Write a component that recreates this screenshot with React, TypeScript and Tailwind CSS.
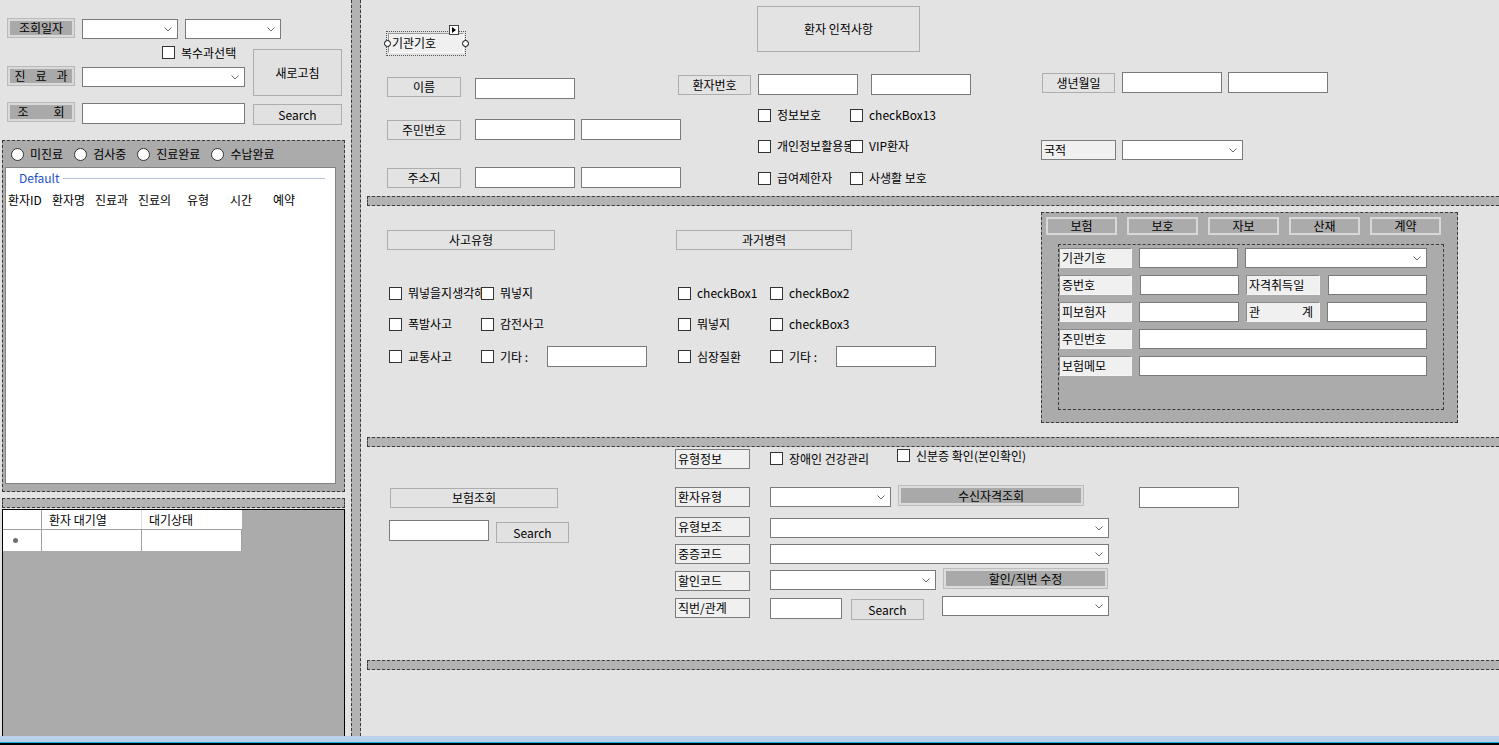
import React from "react";

type P = { className?: string; children?: React.ReactNode };

function Chevron() {
  return (
    <svg width="8" height="5" viewBox="0 0 8 5" className="shrink-0">
      <path d="M0.5 0.5 L4 4 L7.5 0.5" fill="none" stroke="#6a6a6a" strokeWidth="1" />
    </svg>
  );
}

function TB({ className = "" }: P) {
  return <div className={"shrink-0 bg-white border border-[#7a7a7a] " + className} />;
}

function Combo({ className = "" }: P) {
  return (
    <div className={"h-[20px] shrink-0 bg-white border border-[#7a7a7a] flex items-center justify-end pr-[5px] " + className}>
      <Chevron />
    </div>
  );
}

function GrayLabel({ className = "", children }: P) {
  return (
    <div className={"shrink-0 border border-[#bababa] p-[2px] bg-[#d9d9d9] " + className}>
      <div className="w-full h-full bg-[#a9a9a9] flex items-center justify-center whitespace-pre">{children}</div>
    </div>
  );
}

function FlatLabel({ className = "", children }: P) {
  return (
    <div className={"h-[20px] shrink-0 border border-[#adadad] flex items-center justify-center whitespace-nowrap " + className}>
      {children}
    </div>
  );
}

function SunkenLabel({ className = "", children }: P) {
  return (
    <div className={"h-[20px] shrink-0 border border-[#7c7c7c] bg-[#f0f0f0] flex items-center pl-[2px] whitespace-nowrap " + className}>
      {children}
    </div>
  );
}

function InsLabel({ className = "", children }: P) {
  return (
    <div
      className={
        "h-[20px] shrink-0 border border-t-[#8a8a8a] border-l-[#8a8a8a] border-r-[#f4f4f4] border-b-[#f4f4f4] bg-[#f0f0f0] flex items-center pl-[2px] whitespace-nowrap " +
        className
      }
    >
      {children}
    </div>
  );
}

function Btn({ className = "", children }: P) {
  return (
    <div className={"shrink-0 border border-[#adadad] bg-[#e1e1e1] flex items-center justify-center whitespace-nowrap " + className}>
      {children}
    </div>
  );
}

function Check({ className = "", children }: P) {
  return (
    <div className={"flex items-center whitespace-nowrap shrink-0 " + className}>
      <span className="w-[13px] h-[13px] shrink-0 bg-white border border-[#333333]" />
      <span className="ml-[6px]">{children}</span>
    </div>
  );
}

function Radio({ children }: P) {
  return (
    <div className="flex items-center whitespace-nowrap">
      <span className="w-[13px] h-[13px] shrink-0 rounded-full bg-white border border-[#333333]" />
      <span className="ml-[6px]">{children}</span>
    </div>
  );
}

function HBar() {
  return <div className="ml-[6px] h-[10px] shrink-0 bg-[#b3b3b3] border-y border-l border-dashed border-[#3a3a3a]" />;
}

function LeftPanel() {
  return (
    <div className="w-[351px] shrink-0 flex flex-col">
      <div className="h-[140px] shrink-0 pl-[7px] pt-[18px]">
        <div className="flex items-start">
          <GrayLabel className="w-[68px] h-[20px]">조회일자</GrayLabel>
          <Combo className="ml-[7px] mt-[1px] w-[96px]" />
          <Combo className="ml-[7px] mt-[1px] w-[96px]" />
        </div>
        <div className="flex">
          <div className="w-[238px] flex flex-col">
            <Check className="mt-[7px] ml-[155px] h-[13px]">복수과선택</Check>
            <div className="mt-[7px] flex items-start">
              <GrayLabel className="w-[68px] h-[20px]">
                <span className="flex gap-[10px]">
                  <span>진</span>
                  <span>료</span>
                  <span>과</span>
                </span>
              </GrayLabel>
              <Combo className="ml-[7px] mt-[1px] w-[163px]" />
            </div>
            <div className="mt-[15px] flex items-start">
              <GrayLabel className="w-[68px] h-[20px]">
                <span className="flex gap-[25px]">
                  <span>조</span>
                  <span>회</span>
                </span>
              </GrayLabel>
              <TB className="ml-[7px] mt-[1px] w-[163px] h-[21px]" />
            </div>
          </div>
          <div className="ml-[8px] w-[89px] flex flex-col">
            <Btn className="mt-[10px] h-[47px] w-[89px]">새로고침</Btn>
            <Btn className="mt-[8px] h-[21px] w-[89px]">Search</Btn>
          </div>
        </div>
      </div>

      <div className="ml-[2px] w-[343px] h-[352px] shrink-0 border border-dashed border-[#3a3a3a] bg-[#ababab] flex flex-col">
        <div className="h-[26px] shrink-0 flex items-center pl-[8px] gap-[11px]">
          <Radio>미진료</Radio>
          <Radio>검사중</Radio>
          <Radio>진료완료</Radio>
          <Radio>수납완료</Radio>
        </div>
        <div className="ml-[2px] w-[331px] h-[317px] bg-white border border-[#828282] flex flex-col">
          <div className="h-[20px] flex items-center">
            <span className="ml-[13px] text-[#2050c8]">Default</span>
            <span className="flex-1 ml-[3px] mr-[10px] h-[1px] bg-[#b6bedc]" />
          </div>
          <div className="mt-[2px] h-[20px] flex items-center pl-[2px] whitespace-nowrap">
            <span className="w-[44px]">환자ID</span>
            <span className="w-[43px]">환자명</span>
            <span className="w-[43px]">진료과</span>
            <span className="w-[49px]">진료의</span>
            <span className="w-[43px]">유형</span>
            <span className="w-[43px]">시간</span>
            <span>예약</span>
          </div>
        </div>
      </div>

      <div className="mt-[6px] ml-[2px] w-[343px] h-[10px] shrink-0 bg-[#b3b3b3] border border-dashed border-[#3a3a3a]" />

      <div className="mt-[1px] ml-[2px] w-[343px] flex-1 border-x border-t border-black bg-[#ababab] flex flex-col">
        <div className="flex h-[19px] shrink-0">
          <div className="w-[39px] bg-white border-r border-[#a0a0a0]" />
          <div className="w-[100px] bg-white border-r border-[#dcdcdc] pl-[7px] flex items-center whitespace-nowrap">환자 대기열</div>
          <div className="w-[100px] bg-white pl-[7px] flex items-center whitespace-nowrap">대기상태</div>
        </div>
        <div className="flex h-[22px] shrink-0">
          <div className="w-[39px] bg-white border-t border-r border-[#a0a0a0] flex items-center pl-[10px]">
            <span className="w-[5px] h-[5px] rounded-full bg-[#6e6e6e]" />
          </div>
          <div className="w-[100px] bg-white border-t border-r border-[#a0a0a0]" />
          <div className="w-[100px] bg-white border-t border-r border-[#a0a0a0]" />
        </div>
      </div>
    </div>
  );
}

function SelectedLabel() {
  return (
    <div className="relative mt-[33px] ml-[1px] w-[76px] h-[20px] shrink-0">
      <div className="absolute -left-[2px] -right-[2px] -top-[2px] -bottom-[3px] border border-dotted border-[#555555]" />
      <div className="w-full h-full bg-[#f0f0f0] border border-t-[#9a9a9a] border-l-[#9a9a9a] border-r-white border-b-white flex items-center pl-[3px]">
        기관기호
      </div>
      <span className="absolute -left-[4px] top-[7px] w-[7px] h-[7px] rounded-full bg-white border border-black" />
      <span className="absolute -right-[5px] top-[7px] w-[7px] h-[7px] rounded-full bg-white border border-black" />
      <span className="absolute left-[61px] -top-[8px] w-[10px] h-[10px] bg-white border border-[#444444] flex items-center justify-center">
        <svg width="4" height="6" viewBox="0 0 4 6">
          <path d="M0 0 L4 3 L0 6 Z" fill="#000" />
        </svg>
      </span>
    </div>
  );
}

function CheckPair({ a, b, clip = false, className = "" }: { a: string; b: string; clip?: boolean; className?: string }) {
  return (
    <div className={"h-[20px] flex items-center " + className}>
      {clip ? (
        <div className="w-[92px] shrink-0 overflow-hidden">
          <Check>{a}</Check>
        </div>
      ) : (
        <Check className="w-[92px]">{a}</Check>
      )}
      <Check>{b}</Check>
    </div>
  );
}

function TopSection() {
  return (
    <div className="h-[196px] shrink-0 flex">
      <div className="ml-[26px] w-[291px] shrink-0 flex flex-col">
        <SelectedLabel />
        <div className="mt-[24px] flex items-start">
          <FlatLabel className="w-[74px]">이름</FlatLabel>
          <TB className="ml-[14px] mt-[1px] w-[100px] h-[21px]" />
        </div>
        <div className="mt-[20px] flex items-start">
          <FlatLabel className="mt-[1px] w-[74px]">주민번호</FlatLabel>
          <TB className="ml-[14px] w-[100px] h-[21px]" />
          <TB className="ml-[6px] w-[100px] h-[21px]" />
        </div>
        <div className="mt-[27px] flex items-start">
          <FlatLabel className="mt-[1px] w-[74px]">주소지</FlatLabel>
          <TB className="ml-[14px] w-[100px] h-[21px]" />
          <TB className="ml-[6px] w-[100px] h-[21px]" />
        </div>
      </div>

      <div className="w-[363px] shrink-0 flex flex-col">
        <FlatLabel className="ml-[79px] mt-[6px] w-[163px] h-[46px]">환자 인적사항</FlatLabel>
        <div className="mt-[22px] flex items-start">
          <FlatLabel className="mt-[1px] w-[73px]">환자번호</FlatLabel>
          <TB className="ml-[7px] w-[100px] h-[21px]" />
          <TB className="ml-[13px] w-[100px] h-[21px]" />
        </div>
        <CheckPair className="mt-[10px] ml-[80px]" a="정보보호" b="checkBox13" />
        <CheckPair className="mt-[11px] ml-[80px]" a="개인정보활용동의" b="VIP환자" clip />
        <CheckPair className="mt-[12px] ml-[80px]" a="급여제한자" b="사생활 보호" />
      </div>

      <div className="flex flex-col">
        <div className="mt-[72px] flex items-start">
          <FlatLabel className="ml-[1px] mt-[1px] w-[73px]">생년월일</FlatLabel>
          <TB className="ml-[7px] w-[100px] h-[21px]" />
          <TB className="ml-[6px] w-[100px] h-[21px]" />
        </div>
        <div className="mt-[47px] flex items-start">
          <SunkenLabel className="w-[75px]">국적</SunkenLabel>
          <Combo className="ml-[6px] w-[121px]" />
        </div>
      </div>
    </div>
  );
}

function CheckGrid({ rows, clipFirst = false }: { rows: [string, string][]; clipFirst?: boolean }) {
  return (
    <>
      <CheckPair className="mt-[33px] ml-[2px]" a={rows[0][0]} b={rows[0][1]} clip={clipFirst} />
      <CheckPair className="mt-[11px] ml-[2px]" a={rows[1][0]} b={rows[1][1]} />
      <div className="mt-[12px] ml-[2px] h-[21px] flex items-center">
        <Check className="w-[92px]">{rows[2][0]}</Check>
        <Check className="w-[66px]">{rows[2][1]}</Check>
        <TB className="w-[100px] h-[21px]" />
      </div>
    </>
  );
}

function InsurancePanel() {
  const tabs = ["보험", "보호", "자보", "산재", "계약"];
  return (
    <div className="mt-[6px] w-[417px] h-[211px] shrink-0 border border-dashed border-[#3a3a3a] bg-[#ababab] flex flex-col">
      <div className="mt-[4px] ml-[4px] flex gap-[10px]">
        {tabs.map((t) => (
          <div key={t} className="w-[71px] h-[18px] border-[2px] border-[#d8d8d8] flex items-center justify-center">
            {t}
          </div>
        ))}
      </div>
      <div className="mt-[9px] ml-[16px] w-[386px] h-[166px] border border-dashed border-[#3a3a3a] flex flex-col">
        <div className="mt-[3px] flex items-start">
          <InsLabel className="w-[73px]">기관기호</InsLabel>
          <TB className="ml-[7px] w-[99px] h-[20px]" />
          <Combo className="ml-[7px] w-[182px]" />
        </div>
        <div className="mt-[7px] flex items-start">
          <InsLabel className="w-[73px]">증번호</InsLabel>
          <TB className="ml-[8px] w-[99px] h-[20px]" />
          <InsLabel className="ml-[7px] w-[74px]">자격취득일</InsLabel>
          <TB className="ml-[8px] w-[99px] h-[20px]" />
        </div>
        <div className="mt-[7px] flex items-start">
          <InsLabel className="w-[73px]">피보험자</InsLabel>
          <TB className="ml-[7px] w-[100px] h-[20px]" />
          <InsLabel className="ml-[7px] w-[74px] pr-[6px] justify-between">
            <span>관</span>
            <span>계</span>
          </InsLabel>
          <TB className="ml-[7px] w-[100px] h-[20px]" />
        </div>
        <div className="mt-[7px] flex items-start">
          <InsLabel className="w-[73px]">주민번호</InsLabel>
          <TB className="ml-[7px] w-[288px] h-[20px]" />
        </div>
        <div className="mt-[7px] flex items-start">
          <InsLabel className="w-[73px]">보험메모</InsLabel>
          <TB className="ml-[7px] w-[288px] h-[20px]" />
        </div>
      </div>
    </div>
  );
}

function MiddleSection() {
  return (
    <div className="h-[231px] shrink-0 flex">
      <div className="ml-[26px] w-[289px] shrink-0 flex flex-col">
        <FlatLabel className="mt-[24px] w-[168px]">사고유형</FlatLabel>
        <CheckGrid
          clipFirst
          rows={[
            ["뭐넣을지생각해", "뭐넣지"],
            ["폭발사고", "감전사고"],
            ["교통사고", "기타 :"],
          ]}
        />
      </div>
      <div className="w-[365px] shrink-0 flex flex-col">
        <FlatLabel className="mt-[24px] w-[176px]">과거병력</FlatLabel>
        <CheckGrid
          rows={[
            ["checkBox1", "checkBox2"],
            ["뭐넣지", "checkBox3"],
            ["심장질환", "기타 :"],
          ]}
        />
      </div>
      <InsurancePanel />
    </div>
  );
}

function GrayBtn({ className = "", children }: P) {
  return (
    <div className={"shrink-0 border border-[#bdbdbd] p-[2px] bg-[#dcdcdc] " + className}>
      <div className="w-full h-full bg-[#a9a9a9] flex items-center justify-center whitespace-nowrap">{children}</div>
    </div>
  );
}

function BottomSection() {
  return (
    <div className="h-[213px] shrink-0 flex">
      <div className="ml-[28px] w-[286px] shrink-0 flex flex-col">
        <FlatLabel className="ml-[1px] mt-[41px] w-[168px]">보험조회</FlatLabel>
        <div className="mt-[12px] flex items-start">
          <TB className="w-[100px] h-[21px]" />
          <Btn className="ml-[7px] mt-[2px] w-[73px] h-[21px]">Search</Btn>
        </div>
      </div>
      <div className="flex flex-col">
        <div className="mt-[2px] h-[20px] flex items-start">
          <SunkenLabel className="w-[75px]">유형정보</SunkenLabel>
          <Check className="ml-[20px] mt-[3px] w-[127px]">장애인 건강관리</Check>
          <Check className="mt-[0px]">신분증 확인(본인확인)</Check>
        </div>
        <div className="mt-[18px] h-[20px] flex items-start">
          <SunkenLabel className="w-[75px]">환자유형</SunkenLabel>
          <Combo className="ml-[20px] w-[121px]" />
          <GrayBtn className="ml-[7px] -mt-[2px] w-[186px] h-[21px]">수신자격조회</GrayBtn>
          <TB className="ml-[55px] w-[100px] h-[21px]" />
        </div>
        <div className="mt-[10px] h-[20px] flex items-start">
          <SunkenLabel className="w-[75px]">유형보조</SunkenLabel>
          <Combo className="ml-[20px] mt-[1px] w-[339px]" />
        </div>
        <div className="mt-[7px] h-[20px] flex items-start">
          <SunkenLabel className="w-[75px]">중증코드</SunkenLabel>
          <Combo className="ml-[20px] w-[339px]" />
        </div>
        <div className="mt-[7px] h-[20px] flex items-start">
          <SunkenLabel className="w-[75px]">할인코드</SunkenLabel>
          <Combo className="ml-[20px] -mt-[1px] w-[166px]" />
          <GrayBtn className="ml-[7px] -mt-[3px] w-[165px] h-[21px]">할인/직번 수정</GrayBtn>
        </div>
        <div className="mt-[7px] h-[20px] flex items-start">
          <SunkenLabel className="w-[75px]">직번/관계</SunkenLabel>
          <TB className="ml-[20px] w-[72px] h-[21px]" />
          <Btn className="ml-[9px] mt-[1px] w-[73px] h-[21px]">Search</Btn>
          <Combo className="ml-[18px] -mt-[2px] w-[167px]" />
        </div>
      </div>
    </div>
  );
}

export default function App() {
  return (
    <div className="w-[1499px] h-[745px] overflow-hidden bg-[#e3e3e3] text-[12px] leading-none text-black font-['Noto_Sans_CJK_KR',sans-serif] flex flex-col">
      <div className="h-[736px] shrink-0 flex">
        <LeftPanel />
        <div className="w-[10px] shrink-0 bg-[#b3b3b3] border-x border-dashed border-[#3a3a3a]" />
        <div className="flex-1 min-w-0 flex flex-col overflow-hidden">
          <TopSection />
          <HBar />
          <MiddleSection />
          <HBar />
          <BottomSection />
          <HBar />
        </div>
      </div>
      <div className="h-[6px] shrink-0 bg-[#b9d1ea]" />
      <div className="h-[1px] shrink-0 bg-[#1aa7d9]" />
      <div className="flex-1 bg-black" />
    </div>
  );
}
